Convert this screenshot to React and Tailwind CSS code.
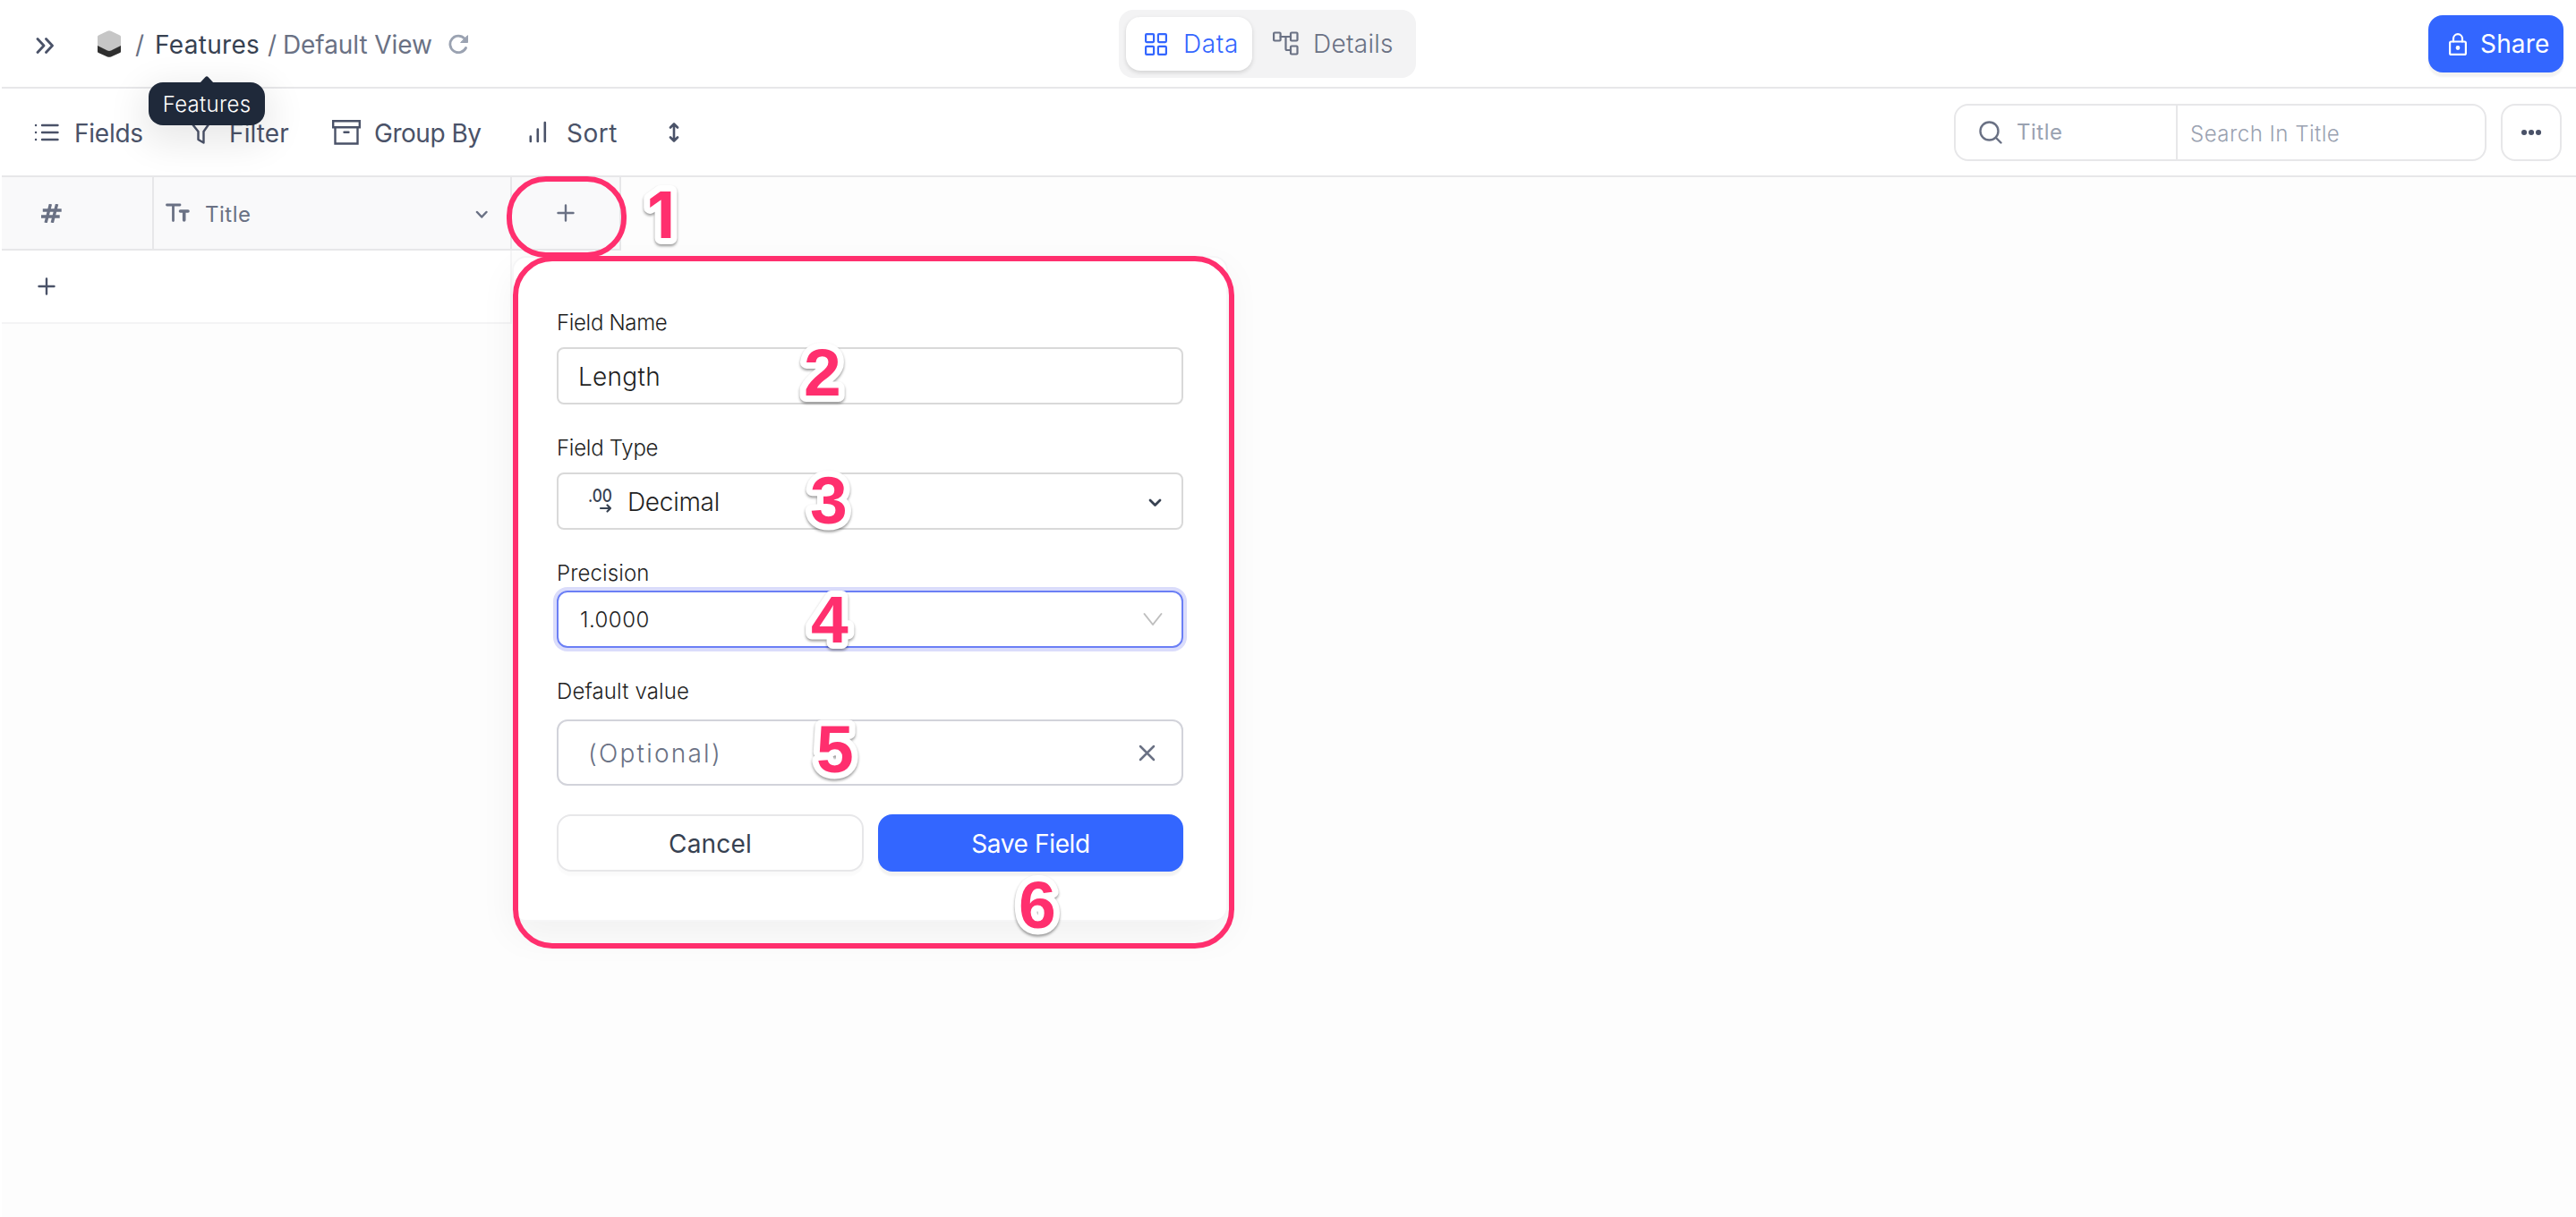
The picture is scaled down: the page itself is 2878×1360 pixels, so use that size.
import React, { useState } from "react";
import clsx from "clsx";

const Svg = ({ w, h, className, children, sw = 2.5 }) => (
  <svg
    width={w}
    height={h}
    viewBox={`0 0 ${w} ${h}`}
    fill="none"
    stroke="currentColor"
    strokeWidth={sw}
    strokeLinecap="round"
    strokeLinejoin="round"
    className={clsx("shrink-0", className)}
  >
    {children}
  </svg>
);

const Cube = () => (
  <svg width="26" height="30" viewBox="0 0 26 30" className="ml-[49px] mb-[2px] shrink-0">
    <path d="M0 16l13 6 13-6v7.5q0 1-1 1.5L15 29.4q-2 .9-4 0L1 25q-1-.5-1-1.5z" fill="#2f2f2f" />
    <path d="M11 .7q2-1 4 0l10 4.800q1 .5 1 1.5v10l-11 5.6q-2 .9-4 0L0 17V7q0-1 1-1.5z" fill="#c6c6c6" />
  </svg>
);

const Header = () => {
  const [tab, setTab] = useState("data");
  return (
    <div className="w-full h-[99px] flex border-b-2 border-[#e7e7e9] bg-white whitespace-nowrap">
      <div className="w-[1248px] h-[100px] flex items-center text-[28px] text-[#6a7184]">
        <Svg w={20} h={18} sw={2.8} className="ml-[38px] mt-[2px] text-[#4a5268]">
          <path d="M2 1.5L9 9l-7 7.5M11.5 1.5l7 7.5-7 7.5" />
        </Svg>
        <Cube />
        <span className="ml-4 w-[22px]">/</span>
        <div className="relative w-[126px] text-[#374151] tracking-[0.011em]">
          Features
          <div
            className="absolute z-20 left-[-7px] top-[63px] w-[130px] h-[48px] rounded-2xl bg-[#1f293a] text-white
          text-[24px] font-light tracking-[0.012em] leading-[50px] text-center
          shadow-[0_12px_40px_8px_rgba(0,0,0,0.09)]"
          >
            <svg width="16" height="8" viewBox="0 0 16 8" className="absolute left-[57px] top-[-7px]">
              <path d="M0 8l6.5-7q1.5-1.4 3 0L16 8z" fill="#1f293a" />
            </svg>
            Features
          </div>
        </div>
        <span className="w-[17px]">/</span>
        <span className="w-[185px] tracking-[-0.003em]">Default View</span>
        <Svg w={23} h={23} sw={2.8} className="mt-[-2px] text-[#9aa2b1]">
          <path d="M19.5 15.5A9.300 9.300 0 1 1 18 5" />
          <path d="M21.5 2v7.5H14z" fill="currentColor" strokeWidth="1" />
        </Svg>
      </div>

      <div className="mt-[11px] w-[332px] h-[76px] p-2 flex rounded-2xl bg-[#f3f3f4] text-[28px] font-light">
        <div
          className={clsx(
            "w-[141px] h-[60px] pl-[21px] flex items-center rounded-2xl cursor-pointer",
            tab == "data" && "bg-white text-[#3366ff] shadow-[0_2px_5px_rgba(0,0,0,0.14)]"
          )}
          onClick={() => setTab("data")}
        >
          <Svg w={25} h={25} sw={2.2}>
            <rect x="1.1" y="1.1" width="9" height="9" rx="1" />
            <rect x="14.9" y="1.1" width="9" height="9" rx="1" />
            <rect x="1.1" y="14.9" width="9" height="9" rx="1" />
            <rect x="14.9" y="14.9" width="9" height="9" rx="1" />
          </Svg>
          <span className="ml-[18px] tracking-[0.023em]">Data</span>
        </div>
        <div
          className={clsx(
            "pl-[23px] h-[60px] flex items-center rounded-2xl cursor-pointer",
            tab == "details" ? "bg-white text-[#3366ff]" : "text-[#6a7184]"
          )}
          onClick={() => setTab("details")}
        >
          <Svg w={29} h={27} sw={2.2} className="mt-[-2px]">
            <rect x="1.1" y="1.5" width="7.5" height="9" rx="1" />
            <rect x="20" y="1.5" width="7.5" height="9" rx="1" />
            <rect x="20" y="16.5" width="7.5" height="9" rx="1" />
            <path d="M8.6 6H20M14.5 6v13.5q0 1.5 1.5 1.5h4" />
          </Svg>
          <span className="ml-4 tracking-[0.01em]">Details</span>
        </div>
      </div>

      <button
        className="ml-auto mr-[14px] mt-[17px] w-[151px] h-[64px] pl-[23px] flex items-center rounded-2xl
      bg-[#3366ff] text-white text-[28px] shadow-[0_5px_2px_rgba(0,0,0,0.05)]"
      >
        <Svg w={20} h={25} sw={2.2}>
          <rect x="1.1" y="9.5" width="17.8" height="14.4" rx="1.5" />
          <path d="M5 9.5V6.2a5 5 0 0 1 10 0v3.300" />
          <circle cx="10" cy="16.5" r="1.3" fill="currentColor" />
        </Svg>
        <span className="ml-[15px] tracking-[0.006em]">Share</span>
      </button>
    </div>
  );
};

const Toolbar = () => {
  return (
    <div className="w-full h-[99px] flex items-center border-b-2 border-[#e7e7e9] bg-white whitespace-nowrap">
      <div className="h-[100px] flex items-center text-[28px] font-[370] text-[#4a5268]">
        <Svg w={28} h={20} sw={2.4} className="ml-[36px]">
          <path d="M9 2h17.5M9 10h17.5M9 18h17.5M2 2h.1M2 10h.1M2 18h.1" />
        </Svg>
        <span className="ml-[17px] mt-[3px] w-[129px] tracking-[-0.009em]">Fields</span>
        <Svg w={24} h={26} sw={2.4}>
          <path d="M1.5 2h21l-7 10v12.5l-6-3.5V12z" />
        </Svg>
        <span className="ml-5 mt-[3px] w-[115px] tracking-[0.004em]">Filter</span>
        <Svg w={32} h={28} sw={2.4} className="mt-[1px]">
          <path d="M1.2 1.2h29.6v7H1.2zM3.5 8.5v18h25v-18M13.5 13.8h5" strokeLinejoin="miter" />
        </Svg>
        <span className="ml-[15px] mt-[3px] w-[173px] tracking-[-0.017em]">Group By</span>
        <Svg w={20} h={25} sw={2.6}>
          <path d="M1.8 17.5v5.5M9.8 9.5V23M17.8 2v21" />
        </Svg>
        <span className="ml-[22px] mt-[3px] w-[115px] tracking-[0.018em]">Sort</span>
        <Svg w={12} h={22} sw={2.6} className="ml-[-1px]">
          <path d="M6 2v18M2 5.5l4-4 4 4M2 16.5l4 4 4-4" />
        </Svg>
      </div>

      <div
        className="ml-auto mt-[1px] w-[595px] h-[64px] flex items-center rounded-2xl border-2 border-[#e7e7e9]
      text-[24px] font-light text-[#9aa2b1]"
      >
        <div className="w-[248px] h-full pl-[26px] flex items-center border-r-2 border-[#e7e7e9]">
          <Svg w={26} h={26} sw={2.4} className="text-[#6a7184]">
            <circle cx="11.5" cy="11.5" r="10" />
            <path d="M19 19l5.5 5.5" />
          </Svg>
          <span className="ml-[16px] font-normal tracking-[0.021em]">Title</span>
        </div>
        <span className="ml-[14px] mt-[4px] tracking-[0.021em]">Search In Title</span>
      </div>
      <button
        className="ml-4 mr-4 mt-[1px] w-[68px] h-[64px] flex items-center justify-center rounded-2xl
      border-2 border-[#e7e7e9] text-[#4a5268]"
      >
        <Svg w={24} h={8}>
          <path d="M4 4h.1M12 4h.1M20 4h.1" strokeWidth="6" />
        </Svg>
      </button>
    </div>
  );
};

const Grid = () => {
  return (
    <div className="flex flex-col">
      <div className="w-[692px] h-[82px] flex border-b-2 border-[#e7e7e9] bg-[#f9f9fa] text-[#6a7184]">
        <div className="w-[170px] flex items-center border-r-2 border-[#e7e7e9]">
          <Svg w={23} h={21} sw={3.4} className="ml-[44px]">
            <path d="M3.5 7h17.5M1.5 14h17.5M10 1.7l-4.5 17.6M17.2 1.7l-4.5 17.6" strokeLinecap="square" />
          </Svg>
        </div>
        <div className="w-[400px] flex items-center border-r-2 border-[#e7e7e9]">
          <Svg w={27} h={21} className="ml-[13px] mb-[2px]">
            <path d="M1.5 2h14.5M8.5 2v17.5" strokeWidth="2.8" />
            <path d="M16.5 9h8.5M20.7 9v10" strokeWidth="3.6" />
          </Svg>
          <span className="ml-[17px] mt-[3px] text-[24px] tracking-[0.021em]">Title</span>
          <Svg w={14} h={10} className="ml-auto mr-[25px] mt-1">
            <path d="M2 2l5.2 5.5L12.4 2" />
          </Svg>
        </div>
        <div className="w-[122px] flex items-center justify-center border-r-2 border-[#e7e7e9]">
          <Svg w={20} h={20} className="mb-[1px]" sw={2.4}>
            <path d="M10 1.5v17M1.5 10h17" />
          </Svg>
        </div>
      </div>
      <div className="w-[570px] h-[82px] flex items-center border-b-2 border-r-2 border-[#f4f4f5] bg-white">
        <Svg w={20} h={20} className="ml-[40px] text-[#4a5268]" sw={2.4}>
          <path d="M10 1.5v17M1.5 10h17" />
        </Svg>
      </div>
    </div>
  );
};

const label = "h-[36px] leading-[36px] text-[24px] font-[330] text-[#1f1f1f]";

const FieldForm = () => {
  return (
    <div
      className="absolute left-[572px] top-[286px] w-[800px] h-[744px] pl-[48px] pt-[55px] flex flex-col
    rounded-2xl border-2 border-[#f6f6f7] bg-white shadow-[0_16px_40px_rgba(0,0,0,0.05)] whitespace-nowrap"
    >
      <div className="w-[700px] flex flex-col">
        <div className={clsx(label, "mb-[9px] tracking-[-0.014em]")}>Field Name</div>
        <div
          className="h-[64px] pl-[22px] pt-[2px] flex items-center rounded-lg border-2 border-[#d9d9d9]
        text-[28px] font-[330] tracking-[0.01em] text-[#1f1f1f]"
        >
          Length
        </div>

        <div className={clsx(label, "mt-[31px] mb-[9px] tracking-[-0.011em]")}>Field Type</div>
        <div
          className="h-[64px] pl-[33px] pr-[22px] flex items-center rounded-lg border-2 border-[#d9d9d9]
        text-[28px] font-[330] tracking-[-0.01em] text-[#1f1f1f]"
        >
          <svg width="28" height="40" viewBox="0 0 28 40" className="shrink-0 text-[#374151]">
            <text x="0" y="21" textLength="27" lengthAdjust="spacingAndGlyphs" fontSize="20" fontWeight="500" fill="currentColor" letterSpacing="0">
              .00
            </text>
            <path
              d="M14 28h11M21.5 24.5l3.5 3.5-3.5 3.5"
              fill="none"
              stroke="currentColor"
              strokeWidth="2.2"
              strokeLinecap="round"
              strokeLinejoin="round"
            />
          </svg>
          <span className="ml-[16px] mt-[2px]">Decimal</span>
          <Svg w={15} h={10} sw={2.8} className="ml-auto mt-[3px] text-[#374151]">
            <path d="M2 2l5.5 5.5L13 2" />
          </Svg>
        </div>

        <div className={clsx(label, "mt-[31px] mb-[1px] tracking-[0.004em]")}>Precision</div>
        <div
          className="h-[64px] pl-[24px] pr-[21px] flex items-center rounded-xl border-2 border-[#6b7ff5]
        ring-4 ring-[#dadcfb] text-[24px] font-[330] tracking-[0.02em] text-[#1f1f1f]"
        >
          <span className="mt-[2px]">1.0000</span>
          <Svg w={22} h={16} sw={2} className="ml-auto text-[#bfbfbf]">
            <path d="M1.5 2L11 14l9.5-12" />
          </Svg>
        </div>

        <div className={clsx(label, "mt-[31px] mb-[13px] tracking-[0.006em]")}>Default value</div>
        <div
          className="h-[74px] pl-[33px] pr-[29px] flex items-center rounded-xl border-2 border-[#d2d3da]
        text-[28px] font-light tracking-[0.08em] text-[#6a7184]"
        >
          <span className="mt-[2px]">(Optional)</span>
          <Svg w={19} h={19} className="ml-auto">
            <path d="M2 2l15 15M17 2L2 17" />
          </Svg>
        </div>

        <div className="mt-8 flex gap-4 text-[28px]">
          <button
            className="w-[343px] h-[64px] pt-[2px] rounded-2xl border-2 border-[#e7e7e9] bg-white text-[#374151]
          tracking-[0.007em] shadow-[0_5px_2px_rgba(0,0,0,0.02)]"
          >
            Cancel
          </button>
          <button
            className="w-[341px] h-[64px] pt-[2px] rounded-2xl bg-[#3366ff] text-white font-[370] tracking-[-0.013em]
          shadow-[0_5px_2px_rgba(0,0,0,0.05)]"
          >
            Save Field
          </button>
        </div>
      </div>
    </div>
  );
};

// x, y is the left end of the digit's baseline
const steps = [
  { n: 1, x: 723, y: 266, font: "Inter", size: 72 },
  { n: 2, x: 898, y: 442, font: "Liberation Sans", size: 75 },
  { n: 3, x: 905, y: 585, font: "Liberation Sans", size: 75 },
  { n: 4, x: 906, y: 718, font: "Liberation Sans", size: 75 },
  { n: 5, x: 912, y: 863, font: "Liberation Sans", size: 75 },
  { n: 6, x: 1138, y: 1037, font: "Liberation Sans", size: 75 },
];

const Callouts = () => (
  <>
    <div className="absolute left-[566px] top-[197px] w-[134px] h-[91px] rounded-[44px] border-[6px] border-[#ff2f6e]" />
    <div className="absolute left-[573px] top-[286px] w-[806px] h-[774px] rounded-[44px] border-[6px] border-[#ff2f6e]" />
    <svg width="1400" height="1100" className="absolute left-0 top-0 drop-shadow-[0_2px_1.5px_rgba(0,0,0,0.4)]">
      {steps.map((s) => (
        <text
          key={s.n}
          x={s.x}
          y={s.y}
          fontFamily={s.font}
          fontSize={s.size}
          fontWeight="700"
          fill="#ff2f6e"
          stroke="#fff"
          strokeWidth="14"
          strokeLinejoin="round"
          paintOrder="stroke"
        >
          {s.n}
        </text>
      ))}
    </svg>
  </>
);

const App = () => {
  return (
    <div className="relative w-full h-[1360px] overflow-hidden border-l-2 border-white bg-[#fdfdfd] font-['Inter',sans-serif]">
      <Header />
      <Toolbar />
      <Grid />
      <div className="absolute inset-y-0 left-[-2px] w-full">
        <FieldForm />
        <Callouts />
      </div>
    </div>
  );
};

export default App;
